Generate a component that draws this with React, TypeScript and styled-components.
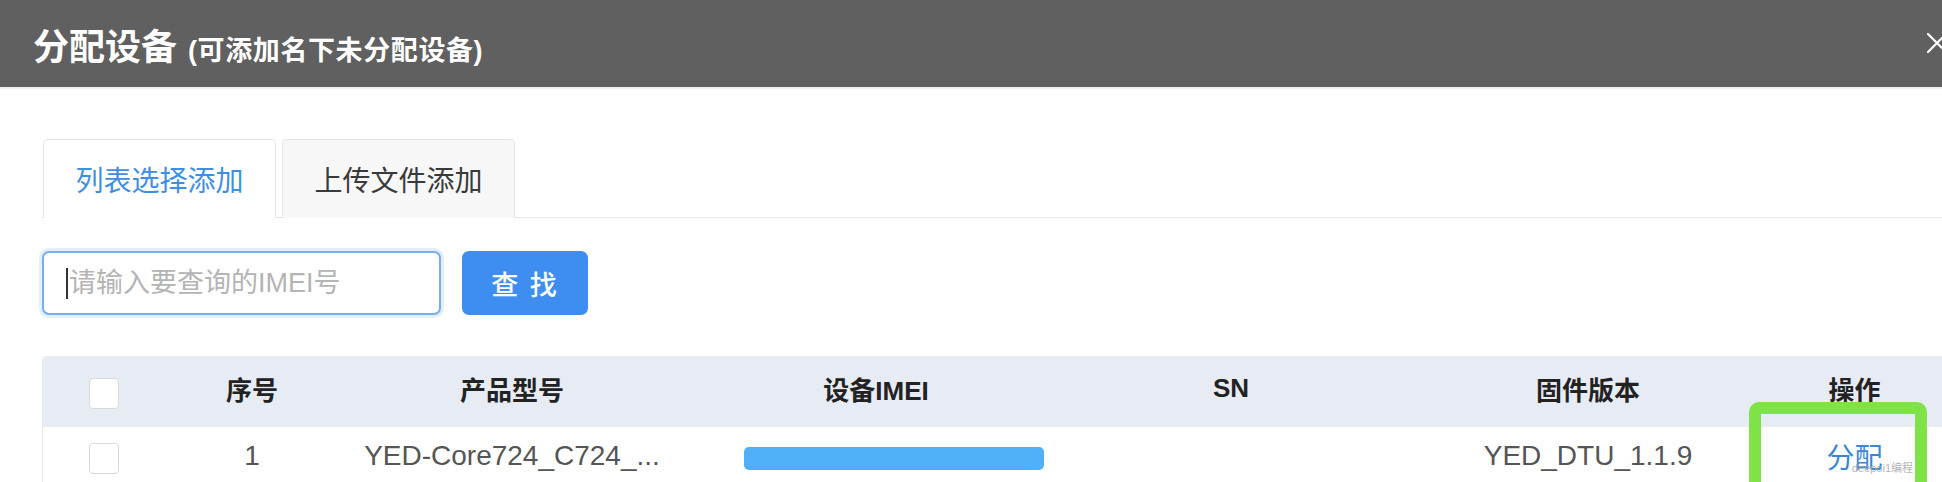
import styled, { createGlobalStyle } from "styled-components";

const GlobalStyle = createGlobalStyle`
  html, body {
    margin: 0;
    padding: 0;
    background: #ffffff;
    overflow: hidden;
  }
  body {
    font-family: "Liberation Sans", "Noto Sans CJK SC", sans-serif;
  }
`

const Dialog = styled.div`
  width: 1960px;
  background: #ffffff;
`

const Header = styled.div`
  height: 87px;
  background: #606060;
  display: flex;
  align-items: center;
  justify-content: space-between;
  padding: 0 13px 0 33px;
  box-sizing: border-box;
  color: #ffffff;
`

const Title = styled.div`
  font-size: 36px;
  font-weight: 700;
  display: flex;
  align-items: baseline;
  gap: 11px;
`

const SubTitle = styled.span`
  font-size: 27px;
  font-weight: 700;
  letter-spacing: 0.6px;
`

const Close = styled.div`
  width: 20px;
  height: 20px;
  margin-top: -2px;
  display: flex;
`

const Body = styled.div`
  padding: 50px 0 0 42px;
  border-top: 2px solid #f1f1f1;
`

const TabBar = styled.div`
  display: flex;
  gap: 6px;
  border-bottom: 1px solid #e4e4e4;
  padding-left: 1px;
`

const Tab = styled.div<{ $active?: boolean }>`
  width: 233px;
  height: 79px;
  box-sizing: border-box;
  display: flex;
  align-items: center;
  justify-content: center;
  font-size: 28px;
  border: 1px solid #e6e6e6;
  border-bottom: none;
  border-radius: 5px 5px 0 0;
  margin-bottom: -1px;
  background: ${(p) => (p.$active ? "#ffffff" : "#f7f7f7")};
  color: ${(p) => (p.$active ? "#3d8fe6" : "#3a3a3a")};
`

const SearchRow = styled.div`
  display: flex;
  gap: 21px;
  margin-top: 33px;
`

const InputWrap = styled.div`
  position: relative;
  width: 399px;
  height: 64px;

  &::before {
    content: "";
    position: absolute;
    left: 24px;
    top: 17px;
    width: 2px;
    height: 31px;
    background: #333;
  }
`

const Input = styled.input`
  width: 100%;
  height: 100%;
  box-sizing: border-box;
  border: 2px solid #79aee6;
  border-radius: 7px;
  box-shadow: 0 0 0 3px rgba(120, 180, 245, 0.22);
  padding: 0 0 0 25px;
  font-family: inherit;
  font-size: 27px;
  outline: none;

  &::placeholder {
    color: #b4b4b4;
  }
`

const SearchButton = styled.button`
  width: 126px;
  height: 64px;
  border: none;
  border-radius: 7px;
  background: #3d8ef0;
  color: #ffffff;
  font-family: inherit;
  font-size: 27px;
  font-weight: 500;
  letter-spacing: 2px;
`

const Table = styled.div`
  margin-top: 41px;
  border: 1px solid #e8e8e8;
  border-right: none;
  border-bottom: none;
  border-radius: 5px 0 0 0;
  overflow: hidden;
`

const Row = styled.div<{ $head?: boolean }>`
  display: grid;
  grid-template-columns: 122px 174px 346px 382px 328px 386px 1fr;
  height: ${(p) => (p.$head ? "70px" : "66px")};
  background: ${(p) => (p.$head ? "#e7ebf3" : "#ffffff")};
  color: ${(p) => (p.$head ? "#222222" : "#555555")};
  font-size: ${(p) => (p.$head ? "26px" : "28px")};
  font-weight: ${(p) => (p.$head ? 700 : 400)};
`

const Cell = styled.div<{ $pad?: number }>`
  display: flex;
  align-items: center;
  justify-content: center;
  white-space: nowrap;
  position: relative;
  padding-right: ${(p) => p.$pad || 0}px;
  padding-bottom: 8px;
`

const Check = styled.div<{ $head?: boolean }>`
  width: 30px;
  height: 31px;
  box-sizing: border-box;
  border: 1px solid #d9d9d9;
  border-radius: 4px;
  background: #ffffff;
  margin-top: ${(p) => (p.$head ? "10px" : "4px")};
`

const Masked = styled.div`
  width: 300px;
  height: 23px;
  border-radius: 5px;
  background: #50aff7;
  margin-left: 36px;
  margin-top: 4px;
`

const Link = styled.span`
  color: #3a86d8;
`

const Highlight = styled.div`
  position: absolute;
  left: -32px;
  top: -25px;
  width: 178px;
  height: 92px;
  box-sizing: border-box;
  border: 12px solid #7fe246;
  border-radius: 10px;
  pointer-events: none;
`

const Watermark = styled.span`
  position: absolute;
  right: 2px;
  bottom: 8px;
  font-size: 11px;
  line-height: 1;
  color: rgba(170, 170, 170, 0.9);
`

const columns = ["序号", "产品型号", "设备IMEI", "SN", "固件版本"]

export default function App() {
  return (
    <Dialog>
      <GlobalStyle />
      <Header>
        <Title>
          分配设备
          <SubTitle>(可添加名下未分配设备)</SubTitle>
        </Title>
        <Close>
          <svg width="20" height="20" viewBox="0 0 20 20">
            <path d="M1 1 L19 19 M19 1 L1 19" stroke="#ffffff" strokeWidth="2.2" strokeLinecap="round" />
          </svg>
        </Close>
      </Header>
      <Body>
        <TabBar>
          <Tab $active>列表选择添加</Tab>
          <Tab>上传文件添加</Tab>
        </TabBar>
        <SearchRow>
          <InputWrap>
            <Input placeholder="请输入要查询的IMEI号" />
          </InputWrap>
          <SearchButton>查 找</SearchButton>
        </SearchRow>
        <Table>
          <Row $head>
            <Cell>
              <Check $head />
            </Cell>
            {columns.map((c) => (
              <Cell key={c}>{c}</Cell>
            ))}
            <Cell $pad={32}>操作</Cell>
          </Row>
          <Row>
            <Cell>
              <Check />
            </Cell>
            <Cell>1</Cell>
            <Cell>YED-Core724_C724_...</Cell>
            <Cell>
              <Masked />
            </Cell>
            <Cell />
            <Cell>YED_DTU_1.1.9</Cell>
            <Cell $pad={32}>
              <Link>分配</Link>
              <Highlight>
                <Watermark>deepoi1编程</Watermark>
              </Highlight>
            </Cell>
          </Row>
        </Table>
      </Body>
    </Dialog>
  )
}
